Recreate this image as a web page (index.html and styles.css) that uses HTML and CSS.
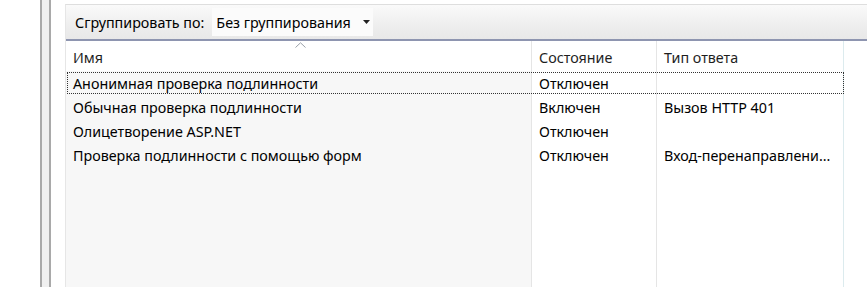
FILE: index.html
```html
<!DOCTYPE html>
<html lang="ru">
<head>
<meta charset="utf-8">
<link rel="stylesheet" href="styles.css">
</head>
<body>
<div class="leftpane"></div>
<div class="splitter"></div>
<div class="gap"></div>
<div class="panel">
  <div class="toolbar">
    <span class="label">Сгруппировать по:</span>
    <div class="dropdown">
      <span class="dd-text">Без группирования</span>
      <svg class="dd-arrow" width="7" height="4" viewBox="0 0 7 4"><path d="M0 0H7L3.5 4Z" fill="#222"/></svg>
    </div>
  </div>
  <div class="list">
    <div class="row header">
      <div class="cell c1">Имя<svg class="sort" width="11" height="6" viewBox="0 0 11 6"><path d="M0.5 5.5L5.5 0.8L10.5 5.5" fill="none" stroke="#9aa0a8" stroke-width="1"/></svg></div>
      <div class="cell c2">Состояние</div>
      <div class="cell c3">Тип ответа</div>
      <div class="cell c4"></div>
    </div>
    <div class="row item focused">
      <div class="cell c1">Анонимная проверка подлинности</div>
      <div class="cell c2">Отключен</div>
      <div class="cell c3"></div>
      <div class="cell c4"></div>
    </div>
    <div class="row item">
      <div class="cell c1">Обычная проверка подлинности</div>
      <div class="cell c2">Включен</div>
      <div class="cell c3">Вызов HTTP 401</div>
      <div class="cell c4"></div>
    </div>
    <div class="row item">
      <div class="cell c1">Олицетворение ASP.NET</div>
      <div class="cell c2">Отключен</div>
      <div class="cell c3"></div>
      <div class="cell c4"></div>
    </div>
    <div class="row item">
      <div class="cell c1">Проверка подлинности с помощью форм</div>
      <div class="cell c2">Отключен</div>
      <div class="cell c3">Вход-перенаправлени...</div>
      <div class="cell c4"></div>
    </div>
    <div class="row filler">
      <div class="cell c1"></div>
      <div class="cell c2"></div>
      <div class="cell c3"></div>
      <div class="cell c4"></div>
    </div>
  </div>
</div>
</body>
</html>
```
FILE: styles.css
```css
html, body {
  margin: 0;
  padding: 0;
  background: #ffffff;
}
body {
  display: flex;
  height: 287px;
  overflow: hidden;
  font-family: "Noto Sans", "Open Sans", sans-serif;
  font-size: 14.3px;
  color: #000;
}
.leftpane {
  width: 40px;
  background: #fff;
}
.splitter {
  width: 7px;
  background: #f0f0f0;
  border-left: 2px solid #a9a9a9;
  border-right: 2px solid #a9a9a9;
}
.gap {
  width: 14px;
  background: #fff;
}
.panel {
  flex: 1;
  margin-top: 4px;
  display: flex;
  flex-direction: column;
  border-left: 1px solid #e6e6e6;
  border-top: 1px solid #dedede;
  min-width: 0;
}
.toolbar {
  height: 36px;
  box-sizing: border-box;
  display: flex;
  align-items: center;
  padding-left: 9px;
  background: linear-gradient(#fafafa, #eeeeee 60%, #e8e8e8);
  border-bottom: 2px solid #8e95b0;
}
.label {
  margin-right: 8px;
}
.dropdown {
  display: flex;
  align-items: center;
  height: 28px;
  width: 161px;
  box-sizing: border-box;
  padding-left: 4px;
  padding-right: 3px;
  background: #fbfbfb;
}
.dd-text {
  flex: 1;
  white-space: nowrap;
}
.list {
  flex: 1;
  display: flex;
  flex-direction: column;
}
.row {
  display: grid;
  grid-template-columns: 465px 125px 187px 1fr;
}
.cell {
  padding-left: 7px;
  display: flex;
  align-items: center;
  white-space: nowrap;
  overflow: hidden;
}
.c2, .c3 {
  border-left: 1px solid #e5e5e5;
  padding-left: 7px;
}
.c4 {
  border-left: 1px solid #dcebee;
}
.header {
  height: 30px;
}
.header .cell {
  background: #fff;
  color: #1e1e1e;
  padding-top: 2px;
}
.header .c1 {
  position: relative;
}
.sort {
  position: absolute;
  left: 229px;
  top: 1px;
}
.item {
  height: 24px;
}
.item .c1, .filler .c1 {
  background: #f7f7f7;
}
.focused {
  outline: 1px dotted #333;
  outline-offset: -2px;
  margin-right: 22px;
  grid-template-columns: 465px 125px 187px 0;
}
.filler {
  flex: 1;
}
```
